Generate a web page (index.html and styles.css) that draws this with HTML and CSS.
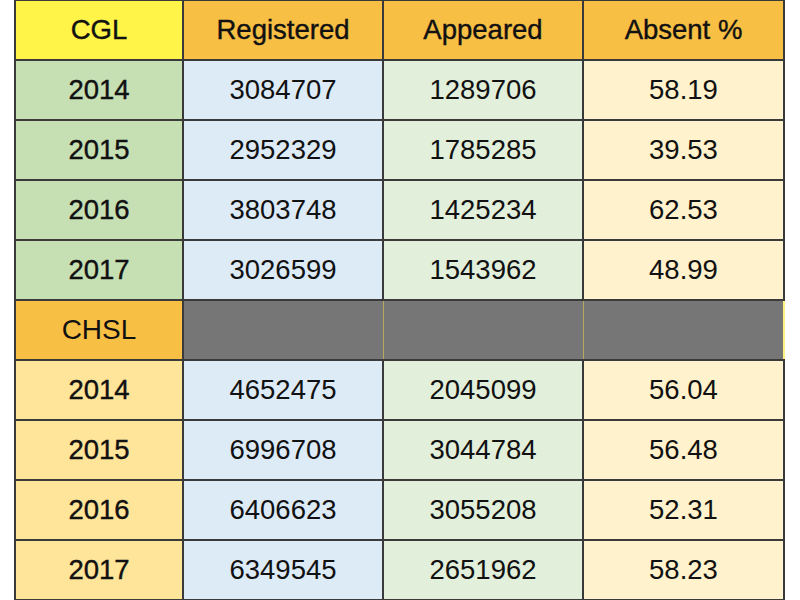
FILE: index.html
```html
<!DOCTYPE html>
<html>
<head>
<meta charset="utf-8">
<link rel="stylesheet" href="styles.css">
</head>
<body>
<table class="stats">
  <tr class="head">
    <td class="cgl">CGL</td>
    <td class="hd">Registered</td>
    <td class="hd">Appeared</td>
    <td class="hd">Absent %</td>
  </tr>
  <tr><td class="yr-g">2014</td><td class="reg">3084707</td><td class="app">1289706</td><td class="abs">58.19</td></tr>
  <tr><td class="yr-g">2015</td><td class="reg">2952329</td><td class="app">1785285</td><td class="abs">39.53</td></tr>
  <tr><td class="yr-g">2016</td><td class="reg">3803748</td><td class="app">1425234</td><td class="abs">62.53</td></tr>
  <tr><td class="yr-g">2017</td><td class="reg">3026599</td><td class="app">1543962</td><td class="abs">48.99</td></tr>
  <tr class="sect">
    <td class="chsl">CHSL</td>
    <td class="gray"></td>
    <td class="gray"></td>
    <td class="gray last"></td>
  </tr>
  <tr><td class="yr-y">2014</td><td class="reg">4652475</td><td class="app">2045099</td><td class="abs">56.04</td></tr>
  <tr><td class="yr-y">2015</td><td class="reg">6996708</td><td class="app">3044784</td><td class="abs">56.48</td></tr>
  <tr><td class="yr-y">2016</td><td class="reg">6406623</td><td class="app">3055208</td><td class="abs">52.31</td></tr>
  <tr><td class="yr-y">2017</td><td class="reg">6349545</td><td class="app">2651962</td><td class="abs">58.23</td></tr>
</table>
</body>
</html>
```

FILE: styles.css
```css
html, body {
  margin: 0;
  padding: 0;
  background: #ffffff;
}

.stats {
  margin: -1px 0 0 14px;
  border-collapse: collapse;
  table-layout: fixed;
  width: 771px;
  font-family: "Liberation Sans", Arial, sans-serif;
  color: #111;
}

.stats td {
  height: 58px;
  padding: 0;
  border: 2px solid #3a3a3a;
  text-align: center;
  vertical-align: middle;
  font-size: 27.5px;
  line-height: 1;
}

.stats td:nth-child(1) { width: 166px; }
.stats td:nth-child(2) { width: 198px; }
.stats td:nth-child(3) { width: 198px; }

.head td {
  font-size: 27.5px;
  -webkit-text-stroke: 0.4px #111;
}

.cgl { background: #fff447; }
.hd { background: #f8bf45; }
.stats td.chsl { background: #f8bf45; font-size: 28px; }

.yr-g { background: #c6e0b4; -webkit-text-stroke: 0.4px #111; }
.yr-y { background: #fee59a; -webkit-text-stroke: 0.4px #111; }
.reg { background: #ddebf7; }
.app { background: #e2efda; }
.abs { background: #fff2cc; }

.stats td.gray {
  background: #767676;
  border-left: 1px solid #b8a962;
  border-right: 1px solid #b8a962;
}

.stats td.gray.last {
  border-right: 2px solid #fff27a;
}
```
